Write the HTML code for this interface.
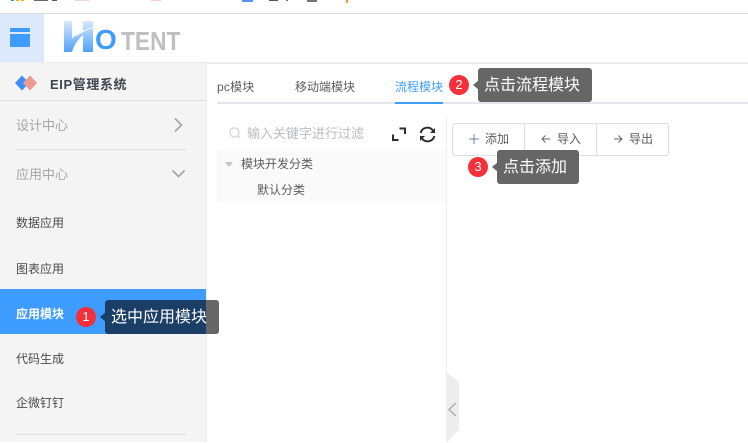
<!DOCTYPE html>
<html lang="zh">
<head>
<meta charset="utf-8">
<style>
html,body{margin:0;padding:0;width:748px;height:442px;overflow:hidden;background:#fff;font-family:"Liberation Sans","Noto Sans CJK SC",sans-serif;}
div,span{position:absolute;white-space:nowrap;}
svg{position:absolute;overflow:visible;}
.t{font-size:12px;line-height:16px;color:#5c5c5c;}
.menu{left:16px;font-size:12px;line-height:16px;color:#4a4a4a;}
.tip{background:#666;color:#fff;font-size:16px;line-height:36px;height:34px;border-radius:3px;text-indent:6px;overflow:hidden;}
.arrow{width:0;height:0;border-top:5px solid transparent;border-bottom:5px solid transparent;border-right:6px solid #666;}
.badge{width:20px;height:20px;border-radius:50%;background:#f5303a;color:#fff;font-size:13px;line-height:20px;text-align:center;}
.bar{height:1px;background:#dedede;}
</style>
</head>
<body>
<!-- browser strip remnants -->
<div style="left:11px;top:0;width:3px;height:1px;background:#3aa757"></div>
<div style="left:16px;top:0;width:3px;height:1px;background:#f5b400"></div>
<div style="left:21px;top:0;width:3px;height:1px;background:#f5b400"></div>
<div style="left:34px;top:0;width:14px;height:1px;background:#666"></div>
<div style="left:52px;top:0;width:5px;height:1px;background:#557"></div>
<div style="left:75px;top:0;width:14px;height:1px;background:#f3d5d5"></div>
<div style="left:151px;top:0;width:10px;height:1px;background:#fbd0d0"></div>
<div style="left:242px;top:0;width:11px;height:2px;background:#5a93f5"></div>
<div style="left:269px;top:0;width:9px;height:1px;background:#555"></div>
<div style="left:286px;top:0;width:2px;height:1px;background:#b55"></div>
<div style="left:307px;top:0;width:10px;height:2px;background:#777"></div>
<div style="left:346px;top:0;width:2px;height:3px;background:#e39a3a"></div>

<!-- header -->
<div style="left:0;top:13px;width:748px;height:1px;background:#dcdcdc"></div>
<div style="left:0;top:14px;width:44px;height:48px;background:#dde8fb"></div>
<div style="left:10px;top:28px;width:20px;height:19px;background:#3f9cff;border-radius:1px"></div>
<div style="left:10px;top:32px;width:20px;height:2px;background:#dde8fb"></div>
<div style="left:44px;top:62px;width:704px;height:2px;background:#ececec"></div>
<div style="left:0;top:62px;width:207px;height:1px;background:#ececec"></div>

<!-- logo -->
<svg style="left:60px;top:18px" width="50" height="36" viewBox="0 0 50 36">
<defs>
<linearGradient id="g" gradientUnits="userSpaceOnUse" x1="0" y1="3" x2="0" y2="34"><stop offset="0" stop-color="#d8e8fc"/><stop offset="1" stop-color="#4fa0fb"/></linearGradient>
</defs>
<path d="M4 3H12V21Q19 12 37 10Q18 15 12 34H4Z" fill="url(#g)"/>
<path d="M23 3H33V34H23Z" fill="url(#g)"/>
<path d="M12 34Q15 24 23 18V34Z" fill="#fff"/>
<path d="M16 18Q24 11 37 9" fill="none" stroke="#fff" stroke-width="1"/>
</svg>
<div style="left:95px;top:25px;font-size:28px;line-height:30px;font-weight:bold;color:#3f9cff">O</div>
<div style="left:121px;top:26px;font-size:26px;line-height:30px;font-weight:bold;color:#bfbfbf;transform:scaleX(.875);transform-origin:0 0">TENT</div>

<!-- sidebar -->
<div style="left:0;top:63px;width:207px;height:379px;background:#f4f4f4"></div>
<div style="left:206px;top:63px;width:1px;height:379px;background:#eef0f5"></div>
<svg style="left:14px;top:74px" width="24" height="18" viewBox="0 0 24 18">
<path d="M8 1.5L1 9L8 16.5L15 9Z" fill="#3f8ffb"/>
<path d="M16 1.5L9 9L16 16.5L23 9Z" fill="#ee9a8e"/>
</svg>
<div style="left:50px;top:76px;font-size:13px;line-height:17px;font-weight:bold;color:#3d4550;letter-spacing:.6px">EIP管理系统</div>
<div style="left:0;top:100px;width:206px;height:1px;background:#dedede"></div>

<div class="menu" style="top:118px;color:#a6a6a6;font-size:13px">设计中心</div>
<svg style="left:172px;top:117px" width="12" height="16" viewBox="0 0 12 16"><path d="M3 1.5L9.5 8L3 14.5" fill="none" stroke="#a3a3a3" stroke-width="1.6"/></svg>
<div class="bar" style="left:16px;top:149px;width:170px"></div>
<div class="menu" style="top:167px;color:#a6a6a6;font-size:13px">应用中心</div>
<svg style="left:171px;top:168px" width="16" height="12" viewBox="0 0 16 12"><path d="M1.5 2.5L7.5 8.5L13.5 2.5" fill="none" stroke="#a3a3a3" stroke-width="1.6"/></svg>

<div class="menu" style="top:215px">数据应用</div>
<div class="menu" style="top:261px">图表应用</div>
<div style="left:0;top:289px;width:206px;height:45px;background:#3f9cff"></div>
<div class="menu" style="top:306px;color:#fff;font-weight:bold">应用模块</div>
<div class="menu" style="top:351px">代码生成</div>
<div class="menu" style="top:395px">企微钉钉</div>
<div class="bar" style="left:16px;top:434px;width:170px"></div>

<!-- tooltip 1 -->
<div class="badge" style="left:76px;top:307px">1</div>
<div class="arrow" style="left:100px;top:312px;border-right-color:#1a3e66"></div>
<div class="tip" style="left:105px;top:300px;width:114px;background:linear-gradient(to right,#1a3e66 0,#1a3e66 101px,#666 101px,#666 100%)">选中应用模块</div>

<!-- tabs -->
<div class="t" style="left:217px;top:79px;letter-spacing:.2px">pc模块</div>
<div class="t" style="left:295px;top:79px">移动端模块</div>
<div class="t" style="left:395px;top:79px;color:#3f9cff">流程模块</div>
<div style="left:217px;top:102px;width:531px;height:2px;background:#e4e7ed"></div>
<div style="left:395px;top:102px;width:48px;height:2px;background:#3f9cff"></div>

<!-- tooltip 2 -->
<div class="badge" style="left:449px;top:75px">2</div>
<div class="arrow" style="left:473px;top:80px"></div>
<div class="tip" style="left:478px;top:68px;width:114px">点击流程模块</div>

<!-- tree panel -->
<svg style="left:228px;top:126px" width="14" height="14" viewBox="0 0 14 14"><circle cx="6.5" cy="6.5" r="4.6" fill="none" stroke="#c8ccd3" stroke-width="1"/><path d="M10 10L12 12" stroke="#c8ccd3" stroke-width="1"/></svg>
<div style="left:247px;top:126px;font-size:13px;line-height:16px;color:#b9bcc2">输入关键字进行过滤</div>
<svg style="left:392px;top:127px" width="14" height="14" viewBox="0 0 14 14"><path d="M7.5 1.5H13V7M1 7.5V13H6.5" fill="none" stroke="#2f2f2f" stroke-width="2"/></svg>
<svg style="left:419px;top:126px" width="17" height="17" viewBox="0 0 17 17"><path d="M1.6 7A7 7 0 0 1 14 4.5M15.4 10A7 7 0 0 1 3 12.5" fill="none" stroke="#2f2f2f" stroke-width="2"/><path d="M16 2V7H11ZM1 15V10H6Z" fill="#2f2f2f"/></svg>
<div style="left:217px;top:150px;width:229px;height:52px;background:#fafafa"></div>
<div style="left:225px;top:162px;width:0;height:0;border-left:4px solid transparent;border-right:4px solid transparent;border-top:5px solid #c0c4cc"></div>
<div class="t" style="left:241px;top:156px">模块开发分类</div>
<div class="t" style="left:257px;top:182px">默认分类</div>

<!-- divider and collapse handle -->
<div style="left:446px;top:118px;width:1px;height:324px;background:#eceef2"></div>
<svg style="left:446px;top:373px" width="14" height="70" viewBox="0 0 14 70"><path d="M1 0L13 9V57L1 69Z" fill="#ededed"/><path d="M10 30L3 36.5L10 43" fill="none" stroke="#a8a8a8" stroke-width="1.3"/></svg>

<!-- button group -->
<div style="left:452px;top:123px;width:215px;height:31px;border:1px solid #dcdfe6;border-radius:3px;background:#fff"></div>
<div style="left:524px;top:124px;width:1px;height:31px;background:#dcdfe6"></div>
<div style="left:596px;top:124px;width:1px;height:31px;background:#dcdfe6"></div>
<svg style="left:468px;top:133px" width="12" height="12" viewBox="0 0 12 12"><path d="M6 1V11M1 6H11" stroke="#6a88a8" stroke-width="1"/></svg>
<div class="t" style="left:485px;top:131px">添加</div>
<svg style="left:541px;top:134px" width="10" height="10" viewBox="0 0 10 10"><path d="M9 5H1M4.5 1.5L1 5L4.5 8.5" fill="none" stroke="#666" stroke-width="1"/></svg>
<div class="t" style="left:557px;top:131px">导入</div>
<svg style="left:613px;top:134px" width="10" height="10" viewBox="0 0 10 10"><path d="M1 5H9M5.5 1.5L9 5L5.5 8.5" fill="none" stroke="#666" stroke-width="1"/></svg>
<div class="t" style="left:629px;top:131px">导出</div>

<!-- tooltip 3 -->
<div class="badge" style="left:468px;top:157px">3</div>
<div class="arrow" style="left:492px;top:162px"></div>
<div class="tip" style="left:497px;top:150px;width:82px">点击添加</div>
</body>
</html>
